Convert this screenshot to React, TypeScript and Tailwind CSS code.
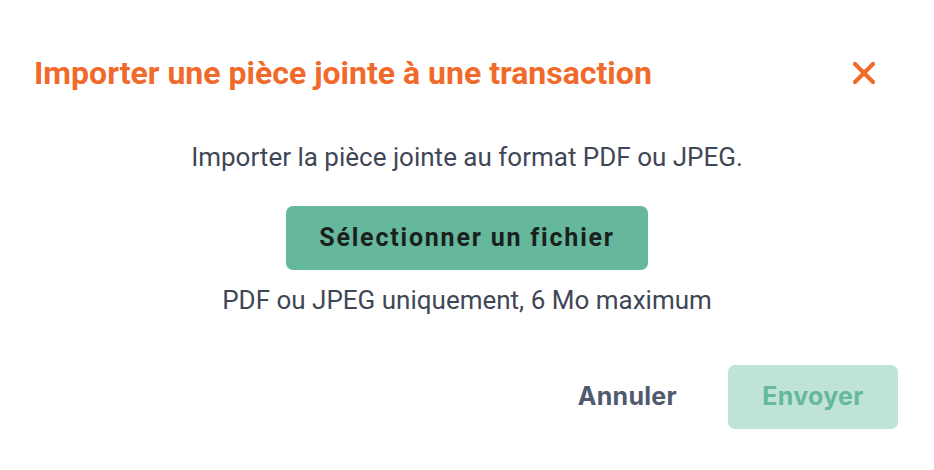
import React from "react";

export default function App() {
  return (
    <div className="w-[934px] h-[470px] bg-white font-['Roboto',sans-serif] flex flex-col">
      <div className="flex items-center justify-between pl-[34px] pr-[57px] pt-[53px]">
        <h1 className="text-[32px] leading-[40px] font-bold text-[#f06a2b]">
          Importer une pièce jointe à une transaction
        </h1>
        <button className="w-[26px] h-[26px] flex items-center justify-center">
          <svg width="24" height="24" viewBox="0 0 24 24" fill="none" stroke="#f06a2b" strokeWidth="4.2" strokeLinecap="round">
            <path d="M3 3L21 21M21 3L3 21" />
          </svg>
        </button>
      </div>
      <div className="flex flex-col items-center mt-[48px]">
        <p className="text-[26px] leading-[32px] text-[#3f4757]">Importer la pièce jointe au format PDF ou JPEG.</p>
        <button className="mt-[33px] w-[362px] h-[64px] rounded-[7px] bg-[#66b89c] text-[#1a1f20] text-[25px] font-bold tracking-[1.8px]">
          Sélectionner un fichier
        </button>
        <p className="mt-[14px] text-[26px] leading-[32px] text-[#3f4757]">PDF ou JPEG uniquement, 6 Mo maximum</p>
      </div>
      <div className="flex items-center justify-end pr-[36px] mt-[49px] gap-[51px]">
        <button className="text-[25px] font-bold text-[#4f5a6e] font-['Inter',sans-serif] tracking-[0.3px]">Annuler</button>
        <button className="w-[170px] h-[64px] rounded-[7px] bg-[#bfe3d7] text-[#66b89c] text-[25px] font-bold font-['Inter',sans-serif] tracking-[0.3px]">
          Envoyer
        </button>
      </div>
    </div>
  );
}
